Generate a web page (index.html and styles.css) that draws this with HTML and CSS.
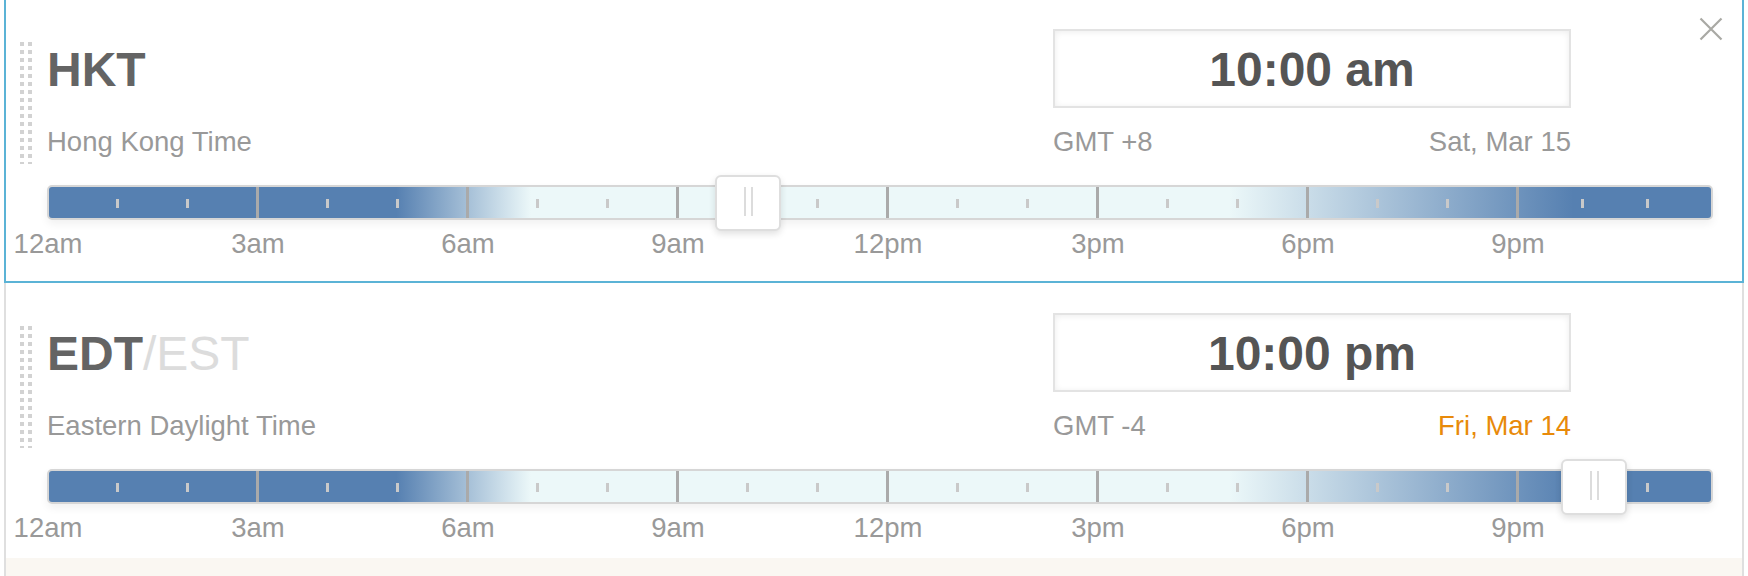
FILE: index.html
```html
<!DOCTYPE html>
<html lang="en">
  <head>
    <meta charset="UTF-8" />
    <meta name="viewport" content="width=device-width, initial-scale=1.0" />
    <title>Time Zones</title>
    <link rel="stylesheet" href="styles.css">
  </head>
  <body>
    <div class="zones">
      <div class="zone active">
        <div class="close">
          <svg viewBox="0 0 24 24" width="24" height="24"><path d="M1.5 1.5 L22.5 22.5 M22.5 1.5 L1.5 22.5" /></svg>
        </div>
        <div class="head">
          <div class="grip"></div>
          <div class="info">
            <div class="abbr">HKT</div>
            <div class="name">Hong Kong Time</div>
          </div>
          <div class="when">
            <div class="time">10:00 am</div>
            <div class="meta"><span>GMT +8</span><span>Sat, Mar 15</span></div>
          </div>
        </div>
        <div class="bar">
          <div class="seg"><i></i><i></i></div>
          <div class="seg"><i></i><i></i></div>
          <div class="seg"><i></i><i></i></div>
          <div class="seg"><i></i><i></i></div>
          <div class="seg"><i></i><i></i></div>
          <div class="seg"><i></i><i></i></div>
          <div class="seg"><i></i><i></i></div>
          <div class="seg end"><i></i><i></i></div>
          <div class="thumb" style="left: 666px"><i></i><i></i></div>
        </div>
        <div class="hours">
          <div><span>12am</span></div>
          <div><span>3am</span></div>
          <div><span>6am</span></div>
          <div><span>9am</span></div>
          <div><span>12pm</span></div>
          <div><span>3pm</span></div>
          <div><span>6pm</span></div>
          <div><span>9pm</span></div>
        </div>
      </div>

      <div class="zone">
        <div class="head">
          <div class="grip"></div>
          <div class="info">
            <div class="abbr">EDT<span class="alt">/EST</span></div>
            <div class="name">Eastern Daylight Time</div>
          </div>
          <div class="when">
            <div class="time">10:00 pm</div>
            <div class="meta"><span>GMT -4</span><span class="prev">Fri, Mar 14</span></div>
          </div>
        </div>
        <div class="bar">
          <div class="seg"><i></i><i></i></div>
          <div class="seg"><i></i><i></i></div>
          <div class="seg"><i></i><i></i></div>
          <div class="seg"><i></i><i></i></div>
          <div class="seg"><i></i><i></i></div>
          <div class="seg"><i></i><i></i></div>
          <div class="seg"><i></i><i></i></div>
          <div class="seg end"><i></i><i></i></div>
          <div class="thumb" style="left: 1512px"><i></i><i></i></div>
        </div>
        <div class="hours">
          <div><span>12am</span></div>
          <div><span>3am</span></div>
          <div><span>6am</span></div>
          <div><span>9am</span></div>
          <div><span>12pm</span></div>
          <div><span>3pm</span></div>
          <div><span>6pm</span></div>
          <div><span>9pm</span></div>
        </div>
      </div>

      <div class="zone-add"></div>
    </div>
  </body>
</html>
```

FILE: styles.css
```css
* {
  box-sizing: border-box;
}
body {
  margin: 0;
  background: #fff;
  font-family: "Liberation Sans", Arial, sans-serif;
  overflow: hidden;
}
.zones {
  margin: -2px 4px 0 4px;
}
.zone {
  position: relative;
  border-left: 2px solid #dfdfdf;
  border-right: 2px solid #dfdfdf;
  padding: 30px 0 14.5px 0;
  background: #fff;
}
.zone.active {
  border: 2px solid #5bb3d6;
  padding: 29px 0 21.5px 0;
}
.close {
  position: absolute;
  top: 17px;
  right: 19px;
  width: 24px;
  height: 24px;
}
.close svg {
  display: block;
}
.close path {
  stroke: #a9a9a4;
  stroke-width: 2.2;
  fill: none;
}
.head {
  display: flex;
  align-items: flex-start;
  padding: 0 171px 0 14px;
}
.grip {
  width: 12px;
  height: 122px;
  margin-top: 13px;
  background-color: #d2d2d2;
  background-image: linear-gradient(to right, transparent 4px, #fff 4px),
    linear-gradient(to bottom, transparent 4px, #fff 4px);
  background-size: 8px 8px;
}
.info {
  flex: 1;
  margin: 13px 0 0 15px;
}
.abbr {
  font-size: 48px;
  line-height: 56px;
  font-weight: bold;
  color: #646464;
}
.abbr .alt {
  font-weight: normal;
  color: #dcdcdc;
}
.name {
  margin-top: 28px;
  font-size: 27.5px;
  line-height: 32px;
  color: #999;
}
.when {
  width: 518px;
}
.time {
  height: 79px;
  border: 2px solid #e3e3e3;
  box-shadow: inset 0 1px 6px rgba(0, 0, 0, 0.08);
  padding-top: 3px;
  font-size: 48px;
  line-height: 72px;
  font-weight: bold;
  color: #555;
  text-align: center;
}
.meta {
  display: flex;
  justify-content: space-between;
  margin-top: 18px;
  font-size: 27.5px;
  line-height: 32px;
  color: #999;
}
.meta .prev {
  color: #e88a0a;
}
.bar {
  position: relative;
  display: flex;
  height: 35px;
  margin: 21px 29px 0 41px;
  border: 2px solid #d6d6d6;
  border-radius: 5px;
  box-shadow: 0 4px 8px rgba(0, 0, 0, 0.06);
  background: linear-gradient(to right,
    #5680b1 0%, #5680b1 20.9%, #ecf8f9 29%,
    #ecf8f9 71%, #5680b1 91.7%, #5680b1 100%);
}
.seg {
  flex: none;
  width: 210px;
  border-right: 3px solid #aaa;
  display: flex;
  justify-content: space-evenly;
  align-items: flex-start;
  padding-top: 12px;
}
.seg.end {
  flex: 1;
  width: auto;
  border-right: none;
}
.seg i {
  width: 3px;
  height: 9px;
  background: #c9c9c9;
}
.thumb {
  position: absolute;
  top: -12px;
  width: 66px;
  height: 56px;
  border: 2px solid #dedede;
  border-radius: 6px;
  background: #fff;
  box-shadow: 0 3px 7px rgba(0, 0, 0, 0.12);
  display: flex;
  justify-content: center;
  gap: 5px;
  padding-top: 10px;
}
.thumb i {
  width: 2px;
  height: 29px;
  background: #dcdcdc;
}
.hours {
  display: flex;
  margin: 7.5px 0 0 42px;
  font-size: 27.5px;
  line-height: 32px;
  color: #999;
}
.hours div {
  flex: none;
  width: 210px;
}
.hours span {
  display: inline-block;
  transform: translateX(-50%);
}
.zone-add {
  height: 60px;
  background: #faf7f2;
  border-left: 2px solid #dfdfdf;
  border-right: 2px solid #dfdfdf;
}
```
